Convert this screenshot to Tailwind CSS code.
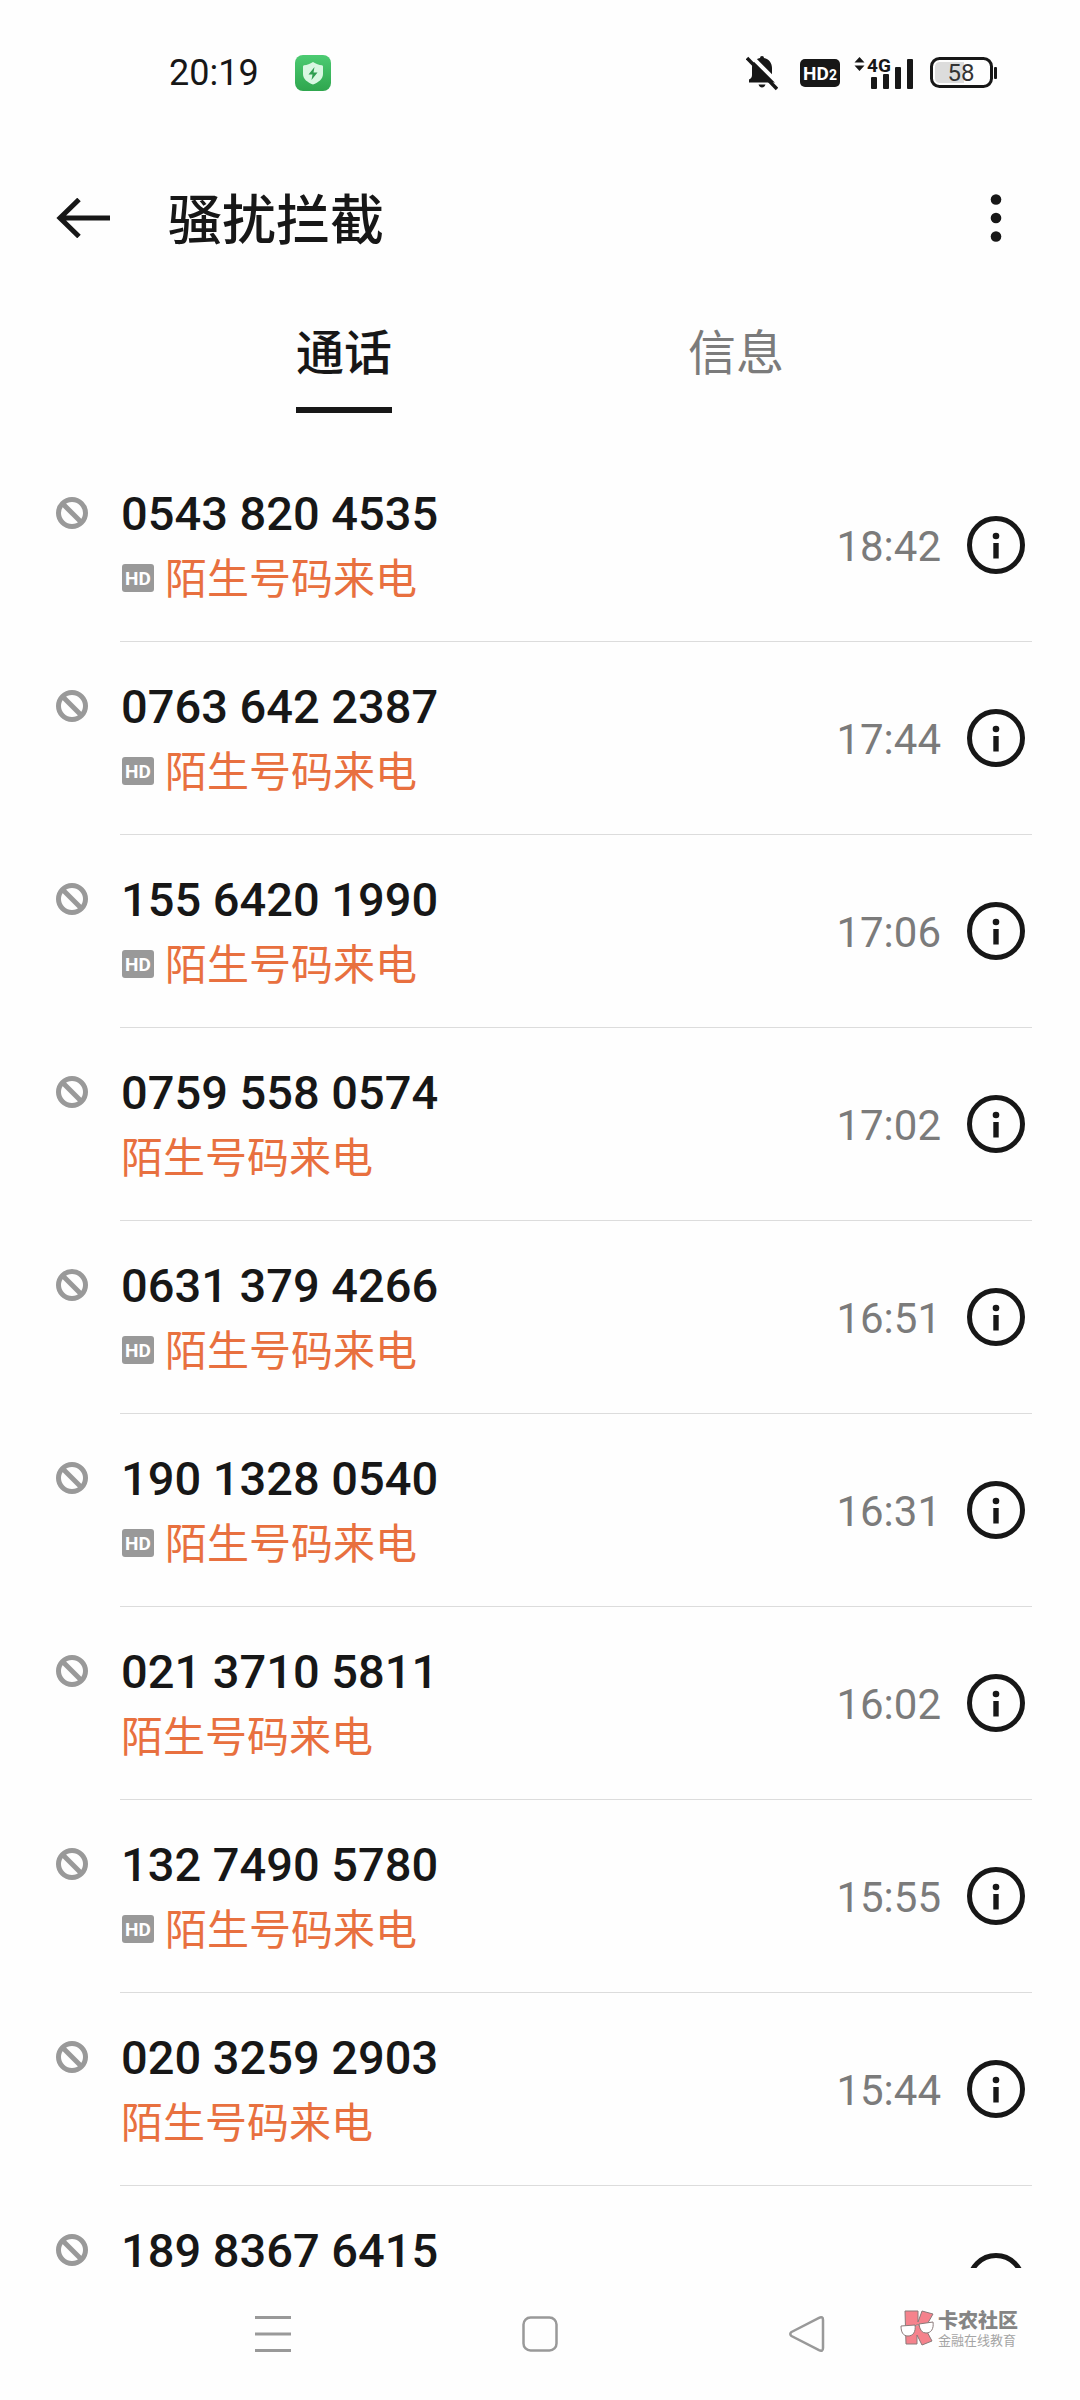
<!DOCTYPE html>
<html lang="zh-CN">
<head>
    <meta charset="UTF-8">
    <meta name="viewport" content="width=device-width, initial-scale=1.0">
    <title>骚扰拦截</title>
    <script src="https://cdn.jsdelivr.net/npm/@tailwindcss/browser@4"></script>
</head>
<body class="bg-[#fefefe] text-[#171717] h-screen flex flex-col overflow-hidden font-['Roboto','Noto_Sans_CJK_SC',sans-serif]">

    <!-- status bar -->
    <div class="flex items-center justify-between h-36 pt-0.5 pl-[169px] pr-[82px] shrink-0">
        <div class="flex items-center gap-9">
            <span class="text-[36px] leading-10">20:19</span>
            <svg class="size-9" viewBox="0 0 36 36">
                <defs>
                    <linearGradient id="green" x1="0" y1="0" x2="0" y2="1">
                        <stop offset="0" stop-color="#4ccb72"/>
                        <stop offset="1" stop-color="#2fa64e"/>
                    </linearGradient>
                </defs>
                <rect width="36" height="36" rx="8" fill="url(#green)"/>
                <path d="M18 7c3 2 6 3 9 3.200q1 .2 1 1.300v7.500c0 5-4.500 8.500-10 10.500c-5.500-2-10-5.500-10-10.500v-7.500q0-1.100 1-1.300c3-.2 6-1.200 9-3.200z" fill="#d9f7e2"/>
                <path d="M19.500 12l-6 7.500h4l-1 5.500l6-7.500h-4z" fill="#2f9e50"/>
            </svg>
        </div>
        <div class="flex items-center">
            <svg class="w-8 h-9 mr-[22px]" viewBox="0 0 32 36" fill="#171717">
                <path d="M14 3q0-2 2-2t2 2c5 1 8 5 8 10v7q0 3 3 4.500v3H3v-3q3-1.500 3-4.500v-7c0-5 3-9 8-10z"/>
                <path d="M12.500 29.500h7q-1 3-3.500 3t-3.500-3z"/>
                <path d="M4 0L35 31" stroke="#fefefe" stroke-width="4"/>
                <path d="M1 3L31 34" stroke="#171717" stroke-width="3.500"/>
            </svg>
            <svg class="w-10 h-7 mr-[14px]" viewBox="0 0 40 28">
                <rect width="40" height="28" rx="5" fill="#171717"/>
                <text x="3" y="21" font-family="Roboto" font-weight="700" font-size="19" fill="#fff">HD</text>
                <text x="29" y="21" font-family="Roboto" font-weight="700" font-size="14" fill="#fff">2</text>
            </svg>
            <svg class="w-[60px] h-8 mr-4" viewBox="0 0 60 32" fill="#171717">
                <path d="M5.500 0l5 5.500h-10zM5.500 14l5-5.500h-10z"/>
                <text x="13" y="15" font-family="Roboto" font-weight="700" font-size="19">4G</text>
                <rect x="17" y="20" width="6" height="12" rx="1"/>
                <rect x="29" y="17" width="6" height="15" rx="1"/>
                <rect x="41" y="10" width="6" height="22" rx="1"/>
                <rect x="53" y="2" width="6" height="30" rx="1"/>
            </svg>
            <svg class="w-[68px] h-8" viewBox="0 0 68 32">
                <rect x="1.500" y="1.500" width="60" height="28" rx="8" fill="none" stroke="#171717" stroke-width="3"/>
                <path d="M10 5h24v21h-24q-5 0-5-5v-11q0-5 5-5z" fill="#dcdcdc"/>
                <rect x="64" y="10" width="3" height="12" rx="1" fill="#171717"/>
                <text x="31" y="24" text-anchor="middle" font-family="Roboto" font-size="24" fill="#333">58</text>
            </svg>
        </div>
    </div>

    <!-- title bar -->
    <header class="flex items-center h-[148px] pl-14 pr-12 shrink-0">
        <button aria-label="返回" class="w-14 h-14 flex items-center">
            <svg class="w-14 h-10" viewBox="0 0 56 40" fill="none" stroke="#171717" stroke-width="5">
                <path d="M4 20H54M23 1.500L4 20L23 38.500"/>
            </svg>
        </button>
        <h1 class="ml-14 pt-2 text-[54px] leading-[64px] font-medium flex-1">骚扰拦截</h1>
        <button aria-label="更多" class="w-[72px] h-14 flex justify-center items-center">
            <svg class="w-3 h-12" viewBox="0 0 12 48" fill="#171717">
                <circle cx="6" cy="5.500" r="5.300"/>
                <circle cx="6" cy="24" r="5.300"/>
                <circle cx="6" cy="42.500" r="5.300"/>
            </svg>
        </button>
    </header>

    <div class="grid grid-cols-2 px-[148px] mb-9 shrink-0 text-[48px] leading-[72px]" role="tablist">
        <button role="tab" aria-selected="true" class="justify-self-center h-[121px] pt-[26px] border-b-[6px] border-[#171717] flex items-start font-medium">通话</button>
        <button role="tab" aria-selected="false" class="justify-self-center h-[121px] pt-[26px] flex items-start text-[#7b7b7b]">信息</button>
    </div>

    <main class="flex-1 min-h-0 overflow-hidden">
        <ul id="call-list"></ul>
    </main>

    <!-- navigation -->
    <nav class="relative grid grid-cols-3 place-items-center h-[132px] px-[139px] shrink-0 text-[#999]">
        <button aria-label="最近任务">
            <svg class="size-9" viewBox="0 0 36 36" stroke="currentColor" stroke-width="3">
                <path d="M0 1.500H36M0 18H36M0 34.500H36"/>
            </svg>
        </button>
        <button aria-label="主屏幕">
            <svg class="size-9" viewBox="0 0 36 36" fill="none" stroke="currentColor" stroke-width="2.500">
                <rect x="1.500" y="1.500" width="33" height="33" rx="7"/>
            </svg>
        </button>
        <button aria-label="返回上一页">
            <svg class="size-9" viewBox="0 0 36 36" fill="none" stroke="currentColor" stroke-width="2.500">
                <path d="M2.500 16L30 1.800Q34 0 34 4V32Q34 36 30 34.200L2.500 20Q0 18 2.500 16z"/>
            </svg>
        </button>
        <div class="absolute right-[62px] top-10 flex items-center gap-0.5">
            <svg class="w-9 h-9" viewBox="0 0 36 36">
                <path d="M5 1h13v11L22 1l11 3l-8 14l7 13l-10 4l-5-10v9H6z" fill="#f5828c" stroke="#8a7a7a"/>
                <path d="M1 16l14-1c1 7-2 11-7 11s-7-4-7-10zM19 14l14-2c1 7-2 11-7 11q-6 0-7-9zM15 16q2-2 4-1" fill="#fff" stroke="#8a7a7a"/>
            </svg>
            <div class="font-['Noto_Sans_CJK_SC',sans-serif]">
                <p class="text-[20px] leading-6 font-black text-[#858585]">卡农社区</p>
                <p class="text-[13px] leading-4 text-[#a5a5a5]">金融在线教育</p>
            </div>
        </div>
    </nav>

    <script>
        const calls = [
            { number: '0543 820 4535', time: '18:42', hd: true },
            { number: '0763 642 2387', time: '17:44', hd: true },
            { number: '155 6420 1990', time: '17:06', hd: true },
            { number: '0759 558 0574', time: '17:02', hd: false },
            { number: '0631 379 4266', time: '16:51', hd: true },
            { number: '190 1328 0540', time: '16:31', hd: true },
            { number: '021 3710 5811', time: '16:02', hd: false },
            { number: '132 7490 5780', time: '15:55', hd: true },
            { number: '020 3259 2903', time: '15:44', hd: false },
            { number: '189 8367 6415', time: '15:38', hd: true }
        ];

        const hdIcon = `
            <svg class="w-8 h-7 ml-px mr-[11px] mb-1" viewBox="0 0 32 28">
                <rect width="32" height="28" rx="3" fill="#999"/>
                <text x="16" y="21" text-anchor="middle" font-family="Roboto" font-weight="700" font-size="19" fill="#fff">HD</text>
            </svg>`;

        const list = document.getElementById('call-list');
        calls.forEach(call => {
            const li = document.createElement('li');
            li.className = 'flex pl-14 pr-12';
            li.innerHTML = `
                <svg class="size-8 mt-12 mr-8 shrink-0" viewBox="0 0 32 32" fill="none" stroke="#999" stroke-width="5">
                    <circle cx="16" cy="16" r="13.500"/>
                    <path d="M7 7L25 25"/>
                </svg>
                <div class="flex flex-1 items-center border-b border-[#dcdcdc]">
                    <div class="flex-1 pl-px pt-8 pb-7">
                        <p class="text-[47px] leading-[66px] font-medium">${call.number}</p>
                        <p class="flex items-center text-[42px] leading-[66px] text-[#e8703f]">${call.hd ? hdIcon : ''}陌生号码来电</p>
                    </div>
                    <time class="pt-1 text-[42px] leading-[64px] text-[#7b7b7b]">${call.time}</time>
                    <button aria-label="详情" class="ml-[26px] mr-[7px]">
                        <svg class="size-[58px]" viewBox="0 0 58 58">
                            <circle cx="29" cy="29" r="26.500" fill="none" stroke="#171717" stroke-width="5"/>
                            <circle cx="29" cy="20" r="3.300" fill="#171717"/>
                            <rect x="26.300" y="27" width="5.400" height="15.500" fill="#171717"/>
                        </svg>
                    </button>
                </div>`;
            list.appendChild(li);
        });
    </script>
</body>
</html>
